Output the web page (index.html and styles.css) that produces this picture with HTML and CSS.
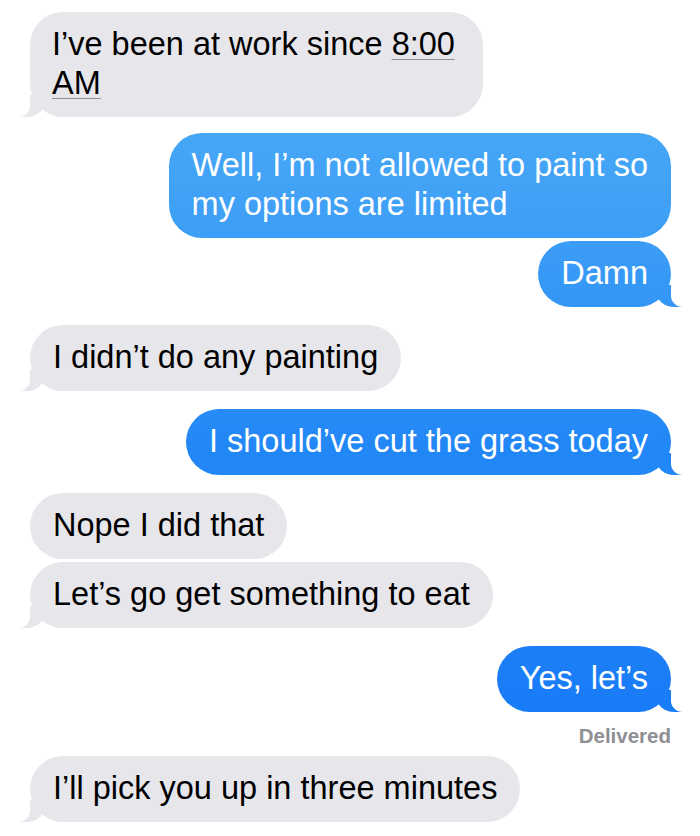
FILE: index.html
```html
<!DOCTYPE html>
<html>
<head>
<meta charset="utf-8">
<link rel="stylesheet" href="styles.css">
</head>
<body>
<div class="thread">
  <div class="bubble in tail first">I’ve been at work since <span class="link">8:00</span><br><span class="link">AM</span></div>
  <div class="bubble out group-first">Well, I’m not allowed to paint so<br>my options are limited</div>
  <div class="bubble out tail same">Damn</div>
  <div class="bubble in tail group">I didn’t do any painting</div>
  <div class="bubble out tail group">I should’ve cut the grass today</div>
  <div class="bubble in group">Nope I did that</div>
  <div class="bubble in tail same">Let’s go get something to eat</div>
  <div class="bubble out tail group">Yes, let’s</div>
  <div class="status">Delivered</div>
  <div class="bubble in tail status-gap">I’ll pick you up in three minutes</div>
</div>
</body>
</html>
```
FILE: styles.css
```css
html, body {
  margin: 0;
  padding: 0;
  background: #ffffff;
}

.thread {
  display: flex;
  flex-direction: column;
  padding: 12px 29px 0 30px;
  font-family: "Liberation Sans", Arial, sans-serif;
}

.bubble {
  position: relative;
  font-size: 32.5px;
  line-height: 39px;
  padding: 13px 23px 14px 23px;
  border-radius: 33px;
  white-space: nowrap;
}

.bubble.in {
  align-self: flex-start;
  background: #e6e6eb;
  color: #000000;
}

.bubble.out {
  align-self: flex-end;
  color: #ffffff;
  background: linear-gradient(180deg, #52b0f6 0px, #40a1f6 200px, #2287f6 450px, #1577f8 836px);
  background-attachment: fixed;
}

.bubble.first { padding-right: 28px; padding-left: 22px; }
.bubble.group-first { margin-top: 16px; }
.bubble.group { margin-top: 18px; }
.bubble.same { margin-top: 3px; }
.bubble.status-gap { margin-top: 8px; }

.link {
  text-decoration: underline;
  text-decoration-color: #8e8e93;
  text-decoration-thickness: 1px;
  text-underline-offset: 4px;
}

/* tails */
.bubble.tail::before,
.bubble.tail::after {
  content: "";
  position: absolute;
  bottom: 0;
  height: 22px;
}

.bubble.in.tail::before {
  left: -10px;
  width: 25px;
  background: #e6e6eb;
  border-bottom-right-radius: 18px 16px;
}
.bubble.in.tail::after {
  left: -13px;
  width: 13px;
  background: #ffffff;
  border-bottom-right-radius: 12px 11px;
}

.bubble.out.tail::before {
  right: -11px;
  width: 26px;
  background: linear-gradient(180deg, #52b0f6 0px, #40a1f6 200px, #2287f6 450px, #1577f8 836px);
  background-attachment: fixed;
  border-bottom-left-radius: 18px 16px;
}
.bubble.out.tail::after {
  right: -14px;
  width: 14px;
  background: #ffffff;
  border-bottom-left-radius: 12px 11px;
}

.status {
  align-self: flex-end;
  margin-top: 12px;
  font-size: 20.5px;
  line-height: 24px;
  font-weight: bold;
  color: #8e8e93;
}
```
